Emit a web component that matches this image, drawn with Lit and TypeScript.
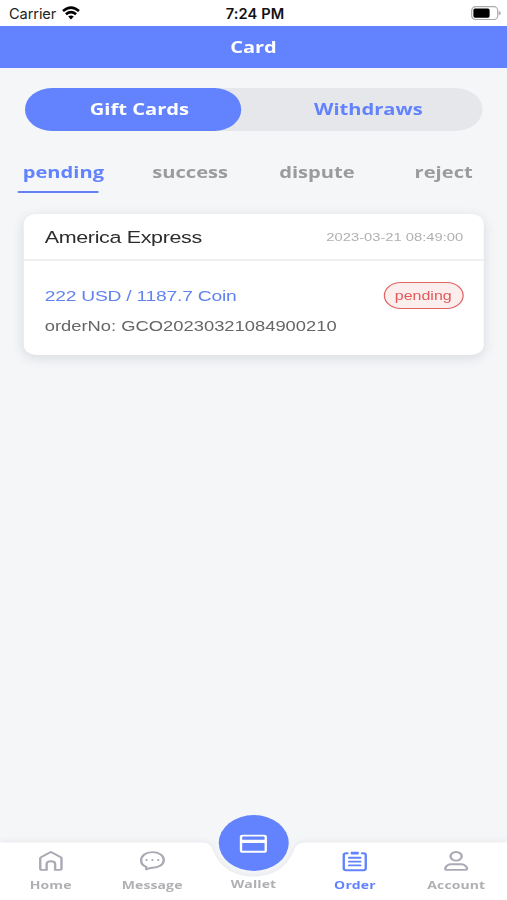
import { LitElement, html, css, svg } from "lit";
import { customElement, property } from "lit/decorators.js";

const icons: Record<string, unknown> = {
  home: svg`<path d="M1.2 7.2Q1.2 6.6 1.8 6.2L9.2 1.2Q9.7 .9 10.2 1.2L17.6 6.2Q18.2 6.6 18.2 7.2V17.8Q18.2 18.9 17.1 18.9H13.1V13Q13.1 10.3 9.7 10.3T6.3 13V18.9H2.3Q1.2 18.9 1.2 17.8Z"/>`,
  message: svg`<path d="M5 18.3V15.8C2.5 14.7 .9 12.4 .9 9.4 .9 4.6 4.6 1.1 9.9 1.1S19 4.5 19 9 15.2 16.7 9.9 16.7C8.2 16.7 6.7 17.6 5 18.3Z"/><path class="dots" d="M5.2 9v.1M9.9 9v.1M14.6 9v.1"/>`,
  order: svg`<path d="M4 2.3H2.9Q1 2.3 1 4.2V17.3Q1 19.2 2.9 19.2H16.7Q18.6 19.2 18.6 17.3V4.2Q18.6 2.3 16.7 2.3H15.6"/><path d="M7.4 1.7H12.2M7.4 2.6H12.2"/><path d="M5.3 6.8H14.3M5.3 10.6H14.3M5.3 14.4H14.3"/>`,
  account: svg`<ellipse cx="9.9" cy="5.3" rx="4.5" ry="4.3"/><path d="M5.6 13.3H14.2C16.8 13.3 18.6 15.8 18.6 17.6Q18.6 18.9 17.3 18.9H2.5Q1.2 18.9 1.2 17.6C1.2 15.8 3 13.3 5.6 13.3Z"/>`,
};

@customElement("status-bar")
class StatusBar extends LitElement {
  static styles = css`
    :host { display: flex; align-items: center; justify-content: space-between; height: 25.5px; box-sizing: border-box; padding: 2px 6px 0 9px; background: #fff; color: #222; font: 14.5px/24px Inter, sans-serif; }
    .left, .right { flex: 1; display: flex; align-items: center; }
    .carrier { letter-spacing: -0.1px; font-size: 14.6px; }
    .left svg { margin: -2px 0 0 6px; }
    .right { justify-content: flex-end; }
    .time { font-weight: 600; font-size: 14.6px; letter-spacing: 0.15px; color: #111; }
  `;
  render() {
    return html`
      <div class="left">
        <span class="carrier">Carrier</span>
        <svg width="18" height="14" viewBox="0 0 18 14" fill="none" stroke="#000" stroke-width="2.6">
          <path d="M1 5.1Q9-1.8 17 5.1" /><path d="M3.9 8.3Q9 4.1 14.1 8.3" />
          <path d="M6.2 10.6Q9 8.6 11.8 10.6L9 13.6Z" fill="#000" stroke="none" />
        </svg>
      </div>
      <span class="time">7:24 PM</span>
      <div class="right">
        <svg width="30" height="15" viewBox="0 0 30 15">
          <rect x="0.7" y="0.7" width="26" height="12.8" rx="3.8" fill="none" stroke="#aaa" stroke-width="1.2" />
          <rect x="2.4" y="2.5" width="16.2" height="9.2" rx="1.6" fill="#000" />
          <path d="M27.8 5Q29.8 5.4 29.8 7.1T27.8 9.2Z" fill="#aaa" />
        </svg>
      </div>`;
  }
}

@customElement("nav-item")
class NavItem extends LitElement {
  @property() icon = "";
  @property() label = "";
  @property({ type: Boolean, reflect: true }) active = false;
  static styles = css`
    :host { display: flex; flex-direction: column; align-items: center; flex: 1; box-sizing: border-box; height: 58px; padding-top: 8.5px; color: #b0b0b4; }
    :host([active]) { color: #6283fd; }
    svg { width: 20px; height: 21px; fill: none; stroke: #aaa9b4; stroke-width: 1.9; stroke-linejoin: round; stroke-linecap: round; overflow: visible; }
    :host([active]) svg { stroke: #6283fd; }
    .dots { stroke-width: 1.9; }
    .spacer { height: 21px; }
    .label { font: 700 11.2px/16px "Open Sans", "Noto Sans", sans-serif; letter-spacing: 0.1px; margin-top: 5.5px; white-space: nowrap; }
    .spacer + .label { margin-top: 4.5px; }
  `;
  render() {
    return html`
      ${this.icon ? html`<svg viewBox="0 0 20 21">${icons[this.icon]}</svg>` : html`<div class="spacer"></div>`}
      <span class="label">${this.label}</span>`;
  }
}

@customElement("app-root")
class AppRoot extends LitElement {
  static styles = css`
    :host { display: block; width: 507px; height: 900px; overflow: hidden; background: #f4f6f8; font-family: "Open Sans", "Noto Sans", sans-serif; }
    .wide { display: flex; flex-direction: column; width: 405.6px; height: 874.5px; transform: scaleX(1.25); transform-origin: 0 0; }
    header { height: 42.5px; background: #6283fd; color: #fff; text-align: center; font-weight: 700; font-size: 16px; line-height: 42px; }
    .segment { position: relative; display: flex; margin: 20px 19.4px 0 20px; height: 43px; border-radius: 21.5px; background: #e6e7eb; }
    .segment::before { content: ""; position: absolute; inset: 0 auto 0 0; width: 173.4px; border-radius: 21.5px; background: #6283fd; }
    .segment span { position: relative; flex: 1; text-align: center; font: 700 16.1px/42px "Open Sans", "Noto Sans", sans-serif; color: #6283fd; }
    .segment .on { color: #fff; }
    .tabs { display: flex; height: 62px; box-sizing: border-box; padding-top: 28px; }
    .tabs span { position: relative; flex: 1; text-align: center; font: 700 16.1px/26px "Open Sans", "Noto Sans", sans-serif; color: #999b9c; }
    .tabs .on { color: #6283fd; }
    .tabs .on::after { content: ""; position: absolute; left: 14px; top: 32px; width: 64.5px; height: 2px; background: #6580f2; border-radius: 1px; }
    .card { margin: 21px 18.4px 0 19.2px; height: 141px; border-radius: 10px; background: #fff; box-shadow: 0 3px 10px rgba(60, 65, 80, 0.15); font-family: "Liberation Sans", Arial, sans-serif; }
    .head { display: flex; justify-content: space-between; align-items: center; height: 46.5px; box-sizing: border-box; padding: 1.5px 16.6px 0; border-bottom: 2px solid #f0f0f2; }
    .name { font-size: 17.2px; letter-spacing: -0.28px; color: #2c2c2c; }
    .date { font-size: 11.8px; color: #b0b0b0; }
    .body { padding: 20.5px 16.6px 0; }
    .row { display: flex; justify-content: space-between; align-items: center; height: 28px; }
    .amount { font-size: 15.4px; letter-spacing: -0.18px; color: #6283f0; padding-top: 2px; }
    .status { box-sizing: border-box; width: 64px; height: 27px; border: 1.4px solid #e06464; border-radius: 14px; background: #fdeeee; color: #e05a5a; font-size: 12.8px; line-height: 26px; text-align: center; }
    .order { font-size: 14.7px; line-height: 30px; padding-top: 2px; color: #666; }
    nav { position: relative; display: flex; height: 58px; margin-top: auto; }
    .plate { position: absolute; left: 0; top: 0; width: 100%; height: 100%; overflow: visible; filter: drop-shadow(0 -1px 3px rgba(60, 65, 80, 0.08)); }
    nav nav-item { position: relative; }
    .fab { position: absolute; left: 174.8px; top: -27px; width: 56px; height: 56px; border-radius: 50%; background: #6283fd; }
    .fab svg { display: block; width: 56px; height: 56px; }
  `;
  render() {
    return html`
      <status-bar></status-bar>
      <div class="wide">
        <header>Card</header>
        <div class="segment"><span class="on">Gift Cards</span><span>Withdraws</span></div>
        <div class="tabs"><span class="on">pending</span><span>success</span><span>dispute</span><span>reject</span></div>
        <section class="card">
          <div class="head"><span class="name">America Express</span><span class="date">2023-03-21 08:49:00</span></div>
          <div class="body">
            <div class="row"><span class="amount">222 USD / 1187.7 Coin</span><span class="status">pending</span></div>
            <div class="order">orderNo: GCO20230321084900210</div>
          </div>
        </section>
        <nav>
          <svg class="plate" viewBox="0 0 507 58" preserveAspectRatio="none">
            <path fill="#fff" d="M0 .5H200C208 .5 211 3 213 8C219 25 234 34.5 253.5 34.5S288 25 294 8C296 3 299 .5 307 .5H507V58H0Z" />
          </svg>
          <nav-item icon="home" label="Home"></nav-item>
          <nav-item icon="message" label="Message"></nav-item>
          <nav-item label="Wallet"></nav-item>
          <nav-item icon="order" label="Order" active></nav-item>
          <nav-item icon="account" label="Account"></nav-item>
          <div class="fab">
            <svg viewBox="0 0 56 56">
              <rect x="17.8" y="20.6" width="19.8" height="16.2" rx="1.4" fill="none" stroke="#fff" stroke-width="1.9" />
              <path d="M18 26.4H37.4" stroke="#fff" stroke-width="3.4" />
            </svg>
          </div>
        </nav>
      </div>`;
  }
}
